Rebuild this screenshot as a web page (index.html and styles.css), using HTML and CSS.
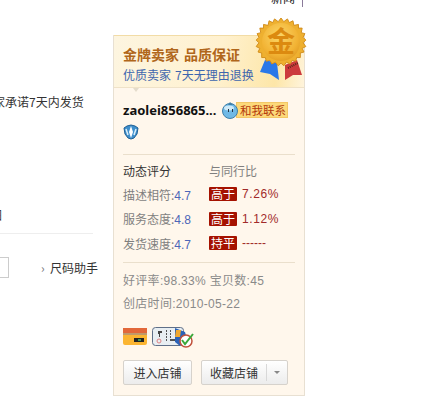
FILE: index.html
```html
<!DOCTYPE html>
<html lang="zh-CN">
<head>
    <meta charset="UTF-8">
    <meta name="viewport" content="width=device-width, initial-scale=1.0">
    <title>店铺信息</title>
    <link rel="stylesheet" href="styles.css">
</head>
<body>
<div class="topbar">
    <span class="top-link">新闻</span>
    <span class="top-sep"></span>
</div>
<div class="main">
    <div class="left">
        <p class="promise">家承诺7天内发货</p>
        <p class="cut-word">图</p>
        <div class="left-line"></div>
        <div class="size-row">
            <span class="size-box"></span>
            <span class="size-help"><span class="chev">›</span>尺码助手</span>
        </div>
    </div>
    <div class="panel">
        <div class="panel-head">
            <div class="head-title"><span>金牌卖家</span><span>品质保证</span></div>
            <div class="head-sub"><span>优质卖家</span><span>7天无理由退换</span></div>
            <svg class="medal" width="52" height="66" viewBox="0 0 52 66">
                <defs>
                    <radialGradient id="gold" cx="45%" cy="35%" r="70%">
                        <stop offset="0%" stop-color="#fbd668"/>
                        <stop offset="70%" stop-color="#f2b334"/>
                        <stop offset="100%" stop-color="#e09a22"/>
                    </radialGradient>
                </defs>
                <polygon points="10,44 22,47 24,64 15,58 5,56" fill="#2a78e8"/>
                <polygon points="30,49 42,44 47,59 38,59 30,64" fill="#cc3a3c"/>
                <path d="M33 52 L43 47" stroke="#5a2a1a" stroke-width="2" stroke-dasharray="1 1"/>
                <g transform="translate(3 2) scale(.92)">
                    <polygon fill="#eeb030" stroke="#d08a18" points="25,0 28,4 32,1 34,5 38,3 39,8 44,7 44,11 48,11 47,16 51,17 49,21 52,24 49,27 52,31 48,33 50,37 46,38 46,43 42,43 41,47 37,46 35,50 31,48 28,52 25,49 22,52 19,48 15,50 13,46 9,47 8,43 4,43 4,38 0,37 2,33 -2,31 1,27 -2,24 1,21 -1,17 3,16 2,11 6,11 6,7 11,8 12,3 16,5 18,1 22,4"/>
                </g>
                <circle cx="26" cy="26" r="19" fill="url(#gold)"/>
                <text x="26" y="36" class="medal-text" text-anchor="middle">金</text>
            </svg>
        </div>
        <div class="notch"></div>
        <div class="seller">
            <div class="seller-line">
                <span class="seller-name">zaolei856865...</span>
                <span class="contact">
                    <svg class="contact-icon" width="18" height="18" viewBox="0 0 18 18">
                        <circle cx="9" cy="10" r="7.5" fill="#6fb9e6" stroke="#3f7fa8"/>
                        <path d="M9 1 L12 4 L7 4 Z" fill="#3f7fa8"/>
                        <ellipse cx="8" cy="7" rx="5" ry="2.5" fill="#cfeaf8"/>
                        <rect x="7" y="8" width="1" height="3" fill="#234"/>
                        <rect x="11" y="8" width="1" height="3" fill="#234"/>
                    </svg>
                    <span class="contact-label">和我联系</span>
                </span>
            </div>
            <svg class="crown" width="16" height="16" viewBox="0 0 16 16">
                <path d="M1 4 L4 2 L8 1 L12 2 L15 4 L14 10 L11 14 L8 15 L5 14 L2 10 Z" fill="#3f8fcc" stroke="#1f5f94"/>
                <path d="M8 2 L10 8 L8 14 L6 8 Z" fill="#fff"/>
                <path d="M3 5 L5 11 M13 5 L11 11" stroke="#d8eefa" stroke-width="1.5"/>
            </svg>
        </div>
        <div class="rates">
            <div class="rate-head"><span class="rate-name">动态评分</span><span>与同行比</span></div>
            <div class="rate-row">
                <span class="rate-name">描述相符:<em>4.7</em></span>
                <span class="tag">高于</span><span class="pct">7.26%</span>
            </div>
            <div class="rate-row">
                <span class="rate-name">服务态度:<em>4.8</em></span>
                <span class="tag">高于</span><span class="pct">1.12%</span>
            </div>
            <div class="rate-row">
                <span class="rate-name">发货速度:<em>4.7</em></span>
                <span class="tag">持平</span><span class="pct pct-flat">------</span>
            </div>
        </div>
        <div class="stats">
            <p>好评率:98.33% 宝贝数:45</p>
            <p>创店时间:2010-05-22</p>
        </div>
        <div class="certs">
            <svg width="25" height="19" viewBox="0 0 25 19">
                <rect x="0" y="1" width="24" height="17" rx="2" fill="#fbb531"/>
                <rect x="0" y="1" width="24" height="5" fill="#e2683a"/>
                <rect x="0" y="6" width="24" height="2" fill="#c09a6a"/>
                <rect x="11" y="11" width="10" height="4" fill="#222"/>
                <rect x="15" y="12" width="3" height="2" fill="#3a9a5a"/>
            </svg>
            <svg width="42" height="21" viewBox="0 0 42 21">
                <rect x="0.5" y="0.5" width="31" height="18" rx="3" fill="#e8eef2" stroke="#5f6f88"/>
                <path d="M6 4 h4 v2 h-2 v4 h-1 v-3 h-1 Z" fill="#444"/>
                <circle cx="7" cy="14" r="2" fill="none" stroke="#e08080"/>
                <path d="M14 4 h1 M14 7 h1 M14 10 h1 M14 13 h1 M18 4 h1 M18 7 h1 M18 10 h1 M18 13 h6" stroke="#222" stroke-width="1.5"/>
                <path d="M23 1 L33 5 L35 12 L28 19 L23 15 Z" fill="#2a62b8"/>
                <path d="M24 3 L29 3 L28 10 L23 10 Z" fill="#f0a830"/>
                <circle cx="34" cy="14" r="6" fill="#fff" stroke="#c0503a" stroke-width="1.5"/>
                <path d="M30 13 L33 17 L41 7" fill="none" stroke="#3aa83a" stroke-width="2"/>
            </svg>
        </div>
        <div class="actions">
            <button class="btn">进入店铺</button>
            <button class="btn btn-split"><span class="btn-main">收藏店铺</span><span class="btn-more"><i class="caret"></i></span></button>
        </div>
    </div>
</div>
</body>
</html>
```

FILE: styles.css
```css
body {
    margin: 0;
    height: 411px;
    overflow: hidden;
    background: #fff;
    font-family: "Noto Sans CJK SC", sans-serif;
    font-size: 12px;
    color: #333;
}

p {
    margin: 0;
}

.topbar {
    height: 35px;
    overflow: hidden;
    display: flex;
    justify-content: flex-end;
    align-items: flex-start;
    padding-right: 142px;
}

.top-link {
    line-height: 12px;
    margin-top: -8px;
    color: #222;
}

.top-sep {
    width: 1px;
    height: 7px;
    margin-left: 7px;
    background: #8a7a9a;
}

.main {
    display: flex;
}

.left {
    width: 113px;
    overflow: hidden;
    flex: none;
}

.promise {
    margin: 60px 0 0 -7px;
    line-height: 14px;
    white-space: nowrap;
}

.cut-word {
    margin: 99px 0 0 -10px;
    line-height: 14px;
}

.left-line {
    width: 93px;
    height: 1px;
    margin-top: 11px;
    background: #eee;
}

.size-row {
    display: flex;
    align-items: center;
    margin-top: 23px;
}

.size-box {
    width: 9px;
    height: 21px;
    box-sizing: border-box;
    border: 1px solid #ccc;
    border-left: none;
    background: #fff;
}

.size-help {
    margin-left: 32px;
    display: flex;
    align-items: center;
    white-space: nowrap;
}

.chev {
    width: 9px;
    color: #777;
}

.panel {
    width: 192px;
    height: 361px;
    box-sizing: border-box;
    border: 1px solid #e8e0d2;
    background: #fff7ec;
    position: relative;
}

.panel-head {
    height: 53px;
    box-sizing: border-box;
    padding: 8px 0 0 9px;
    border-bottom: 1px solid #efe2c8;
    border-top: 1px solid #f2dca6;
    margin-top: -1px;
    background: linear-gradient(100deg, #fdf5e0 0%, #fff1cf 55%, #fde6a8 85%, #fff4dc 100%);
}

.head-title {
    display: flex;
    gap: 5px;
    font-size: 14px;
    line-height: 20px;
    font-weight: bold;
    color: #b0661a;
}

.head-sub {
    display: flex;
    gap: 4px;
    line-height: 16px;
    margin-top: 3px;
    color: #3d66ae;
}

.medal {
    position: absolute;
    left: 141px;
    top: -20px;
}

.medal-text {
    font-size: 28px;
    font-weight: bold;
    fill: #dc8a10;
    font-family: "Noto Sans CJK SC", sans-serif;
}

.notch {
    width: 0;
    margin-left: 19px;
    border: 3px solid transparent;
    border-top: 4px solid #e4dccb;
    border-bottom: none;
}

.seller {
    margin: 8px 9px 0;
    padding-bottom: 14px;
    border-bottom: 1px solid #eadfcc;
}

.seller-line {
    display: flex;
    align-items: center;
    height: 20px;
}

.seller-name {
    font-family: "Noto Sans", sans-serif;
    font-size: 13px;
    font-weight: bold;
    color: #111;
    width: 98px;
    flex: none;
    white-space: nowrap;
}

.contact {
    display: flex;
    align-items: center;
}

.contact-icon {
    position: relative;
    z-index: 1;
    margin-right: -3px;
}

.contact-label {
    height: 14px;
    line-height: 14px;
    padding: 0 1px 0 3px;
    border: 1px solid #f3c766;
    background: #fcd97a;
    color: #b43a0c;
    font-size: 11.5px;
    white-space: nowrap;
}

.crown {
    display: block;
    margin-top: 4px;
}

.rates {
    margin: 0 9px;
    padding: 5px 0 6px;
    border-bottom: 1px solid #eadfcc;
    color: #7f7f7f;
}

.rate-head {
    display: flex;
    line-height: 22px;
}

.rate-head .rate-name {
    color: #333;
}

.rate-name {
    width: 86px;
}

.rate-name em {
    font-style: normal;
    font-family: "Liberation Sans", sans-serif;
    color: #4c66b8;
}

.rate-row {
    display: flex;
    align-items: center;
    height: 24.5px;
}

.tag {
    width: 28px;
    height: 14px;
    line-height: 14px;
    text-align: center;
    background: #a51200;
    color: #fff;
    border-radius: 1px;
    margin-right: 5px;
}

.pct {
    font-family: "Liberation Sans", sans-serif;
    color: #a12a2a;
    letter-spacing: 0.6px;
}

.pct-flat {
    letter-spacing: 0;
}

.stats {
    margin: 0 9px;
    padding-top: 7px;
    color: #8a8a8a;
    font-family: "Liberation Sans", "Noto Sans CJK SC", sans-serif;
    letter-spacing: 0.3px;
}

.stats p {
    line-height: 23px;
}

.certs {
    display: flex;
    align-items: flex-start;
    gap: 4px;
    margin: 11px 9px 0;
}

.actions {
    display: flex;
    gap: 9px;
    margin: 12px 9px 0;
}

.btn {
    height: 25px;
    padding: 0;
    width: 69px;
    border: 1px solid #d6d2cc;
    border-radius: 2px;
    background: linear-gradient(#fff, #ececec);
    color: #333;
    font: 12px "Noto Sans CJK SC", sans-serif;
}

.btn-split {
    width: 87px;
    display: flex;
    align-items: center;
}

.btn-main {
    width: 64px;
    text-align: center;
}

.btn-more {
    flex: 1;
    height: 17px;
    border-left: 1px solid #d8d8d8;
    display: flex;
    align-items: center;
    justify-content: center;
}

.caret {
    border: 3px solid transparent;
    border-top: 3px solid #888;
    border-bottom: none;
}
```
